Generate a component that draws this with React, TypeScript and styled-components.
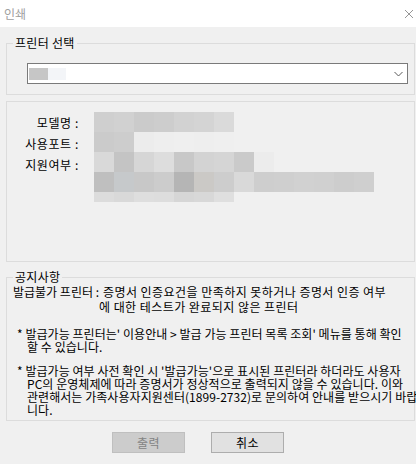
import React from "react";
import styled, { createGlobalStyle } from "styled-components";

const GlobalStyle = createGlobalStyle`
  html, body { margin: 0; padding: 0; background: #ffffff; }
  body {
    font-family: "Noto Sans CJK KR", "Noto Sans", sans-serif;
    font-size: 12px;
    color: #000;
  }
`;

const Window = styled.div`
  width: 416px;
  height: 464px;
  background: #f0f0f0;
  display: flex;
  flex-direction: column;
  overflow: hidden;
`;

const TitleBar = styled.div`
  height: 27px;
  flex: none;
  background: #ffffff;
  display: flex;
  align-items: center;
  justify-content: space-between;
  padding: 0 2px 0 4px;
  box-sizing: border-box;
`;

const Title = styled.span`
  font-size: 12px;
  color: #a0a0a0;
  line-height: 14px;
`;

const CloseIcon = styled.svg`
  width: 10px;
  height: 10px;
  display: block;
`;

const Body = styled.div`
  flex: 1;
  display: flex;
  flex-direction: column;
  padding: 0 1px 0 6px;
`;

const Group = styled.fieldset<{ $mt: number }>`
  margin: ${(p) => p.$mt}px 0 0 0;
  padding: 0;
  border: 1px solid #dcdcdc;
  min-width: 0;
`;

const Legend = styled.legend`
  margin-left: 6px;
  padding: 0 2px;
  font-size: 12px;
  line-height: 14px;
  letter-spacing: 0.3px;
`;

const GroupInner = styled.div<{ $pad: string }>`
  padding: ${(p) => p.$pad};
`;

const Select = styled.div`
  height: 21px;
  box-sizing: border-box;
  border: 1px solid #7a7a7a;
  background: #ffffff;
  display: flex;
  align-items: center;
  justify-content: space-between;
  padding: 0 4px 0 1px;
`;

const SelectValue = styled.div`
  display: flex;
`;

const BlurCell = styled.span<{ $c: string; $w: number; $h: number }>`
  display: block;
  width: ${(p) => p.$w}px;
  height: ${(p) => p.$h}px;
  background: ${(p) => p.$c};
`;

const InfoGrid = styled.div`
  display: grid;
  grid-template-columns: 72px 1fr;
  column-gap: 15px;
`;

const Labels = styled.div`
  display: flex;
  flex-direction: column;
  align-items: flex-end;
`;

const Label = styled.div`
  line-height: 21px;
  height: 21px;
  white-space: nowrap;
  letter-spacing: 0.6px;
`;

const Mosaic = styled.div`
  display: flex;
  flex-direction: column;
`;

const MosaicRow = styled.div`
  display: flex;
`;

const Notice = styled.div`
  white-space: nowrap;
  letter-spacing: 0.05px;
`;

const DefRow = styled.div`
  display: grid;
  grid-template-columns: 86px auto;
  line-height: 15px;
`;

const DefLabel = styled.span`
  letter-spacing: 0;
`;

const DefValue = styled.span`
  text-indent: 4px;
  letter-spacing: 0.45px;
`;

const Bullet = styled.div<{ $mt: number; $pl: number }>`
  margin-top: ${(p) => p.$mt}px;
  padding-left: ${(p) => p.$pl}px;
  text-indent: -10px;
  line-height: 13px;
`;

const Buttons = styled.div`
  display: flex;
  gap: 26px;
  margin-top: 11px;
  padding-left: 106px;
`;

const Button = styled.button<{ $disabled?: boolean }>`
  width: 73px;
  height: 21px;
  box-sizing: border-box;
  margin: 0;
  padding: 0;
  font-family: inherit;
  font-size: 12px;
  line-height: 19px;
  letter-spacing: 0.5px;
  border: 1px solid ${(p) => (p.$disabled ? "#bfbfbf" : "#adadad")};
  background: ${(p) => (p.$disabled ? "#cccccc" : "#e1e1e1")};
  color: ${(p) => (p.$disabled ? "#838383" : "#000000")};
`;

const mosaic: { h: number; cells: string[] }[] = [
  { h: 20, cells: ["#cfcfcf", "#d1d1d1", "#cbcbcb", "#cdcdcd", "#d2d2d2", "#d4d4d4", "#dadada"] },
  { h: 20, cells: ["#cbcbcb", "#cdcdcd", "#ececec", "#eeeeee", "#efefef", "#eeeeee", "#efefef", "#f0f0f0"] },
  { h: 20, cells: ["#d9d9d9", "#c4c4c4", "#d6d6d6", "#dddddd", "#c8c8c8", "#d3d3d3", "#d5d5d5", "#cacaca", "#ececec"] },
  {
    h: 20,
    cells: [
      "#bfbfbf", "#c6c9cb", "#c8c8c8", "#cccccc", "#b5b5b5", "#cbc9c6", "#cdcdcd",
      "#d9d9d9", "#cecece", "#cfcfcf", "#d1d1d1", "#d0d0d0", "#cdcdcd", "#cfcfcf",
    ],
  },
  { h: 10, cells: ["#dcdcdc", "#d9d9d9", "#dedede", "#dddddd", "#d6d6d6", "#d8d8d8", "#dfdfdf"] },
];

export default function App() {
  return (
    <>
      <GlobalStyle />
      <Window>
        <TitleBar>
          <Title>인쇄</Title>
          <CloseIcon viewBox="0 0 10 10">
            <path d="M1 1 L9 9 M9 1 L1 9" stroke="#8a8a8a" strokeWidth="0.9" fill="none" />
          </CloseIcon>
        </TitleBar>
        <Body>
          <Group $mt={9}>
            <Legend>프린터 선택</Legend>
            <GroupInner $pad="13px 6px 10px 20px">
              <Select>
                <SelectValue>
                  <BlurCell $c="#c6c6c6" $w={19} $h={12} />
                  <BlurCell $c="#f3f5f8" $w={18} $h={12} />
                </SelectValue>
                <svg width="9" height="6" viewBox="0 0 9 6">
                  <path d="M0.5 1 L4.5 5 L8.5 1" stroke="#5a5a5a" strokeWidth="1" fill="none" />
                </svg>
              </Select>
            </GroupInner>
          </Group>

          <Group $mt={6}>
            <GroupInner $pad="10px 0 59px 0">
              <InfoGrid>
                <Labels>
                  <Label>모델명 :</Label>
                  <Label>사용포트 :</Label>
                  <Label>지원여부 :</Label>
                </Labels>
                <Mosaic>
                  {mosaic.map((row, i) => (
                    <MosaicRow key={i}>
                      {row.cells.map((c, j) => (
                        <BlurCell key={j} $c={c} $w={20} $h={row.h} />
                      ))}
                    </MosaicRow>
                  ))}
                </Mosaic>
              </InfoGrid>
            </GroupInner>
          </Group>

          <Group $mt={8}>
            <Legend>공지사항</Legend>
            <GroupInner $pad="0 6px 4px 6px">
              <Notice>
                <DefRow>
                  <DefLabel>발급불가 프린터 :</DefLabel>
                  <DefValue>
                    증명서 인증요건을 만족하지 못하거나 증명서 인증 여부
                    <br />에 대한 테스트가 완료되지 않은 프린터
                  </DefValue>
                </DefRow>
                <Bullet $mt={13} $pl={14}>
                  * 발급가능 프린터는' 이용안내 &gt; 발급 가능 프린터 목록 조회' 메뉴를 통해 확인
                  <br />할 수 있습니다.
                </Bullet>
                <Bullet $mt={11} $pl={14}>
                  * 발급가능 여부 사전 확인 시 '발급가능'으로 표시된 프린터라 하더라도 사용자
                  <br />PC의 운영체제에 따라 증명서가 정상적으로 출력되지 않을 수 있습니다. 이와
                  <br />관련해서는 가족사용자지원센터(1899-2732)로 문의하여 안내를 받으시기 바랍
                  <br />니다.
                </Bullet>
              </Notice>
            </GroupInner>
          </Group>

          <Buttons>
            <Button $disabled disabled>
              출력
            </Button>
            <Button>취소</Button>
          </Buttons>
        </Body>
      </Window>
    </>
  );
}
